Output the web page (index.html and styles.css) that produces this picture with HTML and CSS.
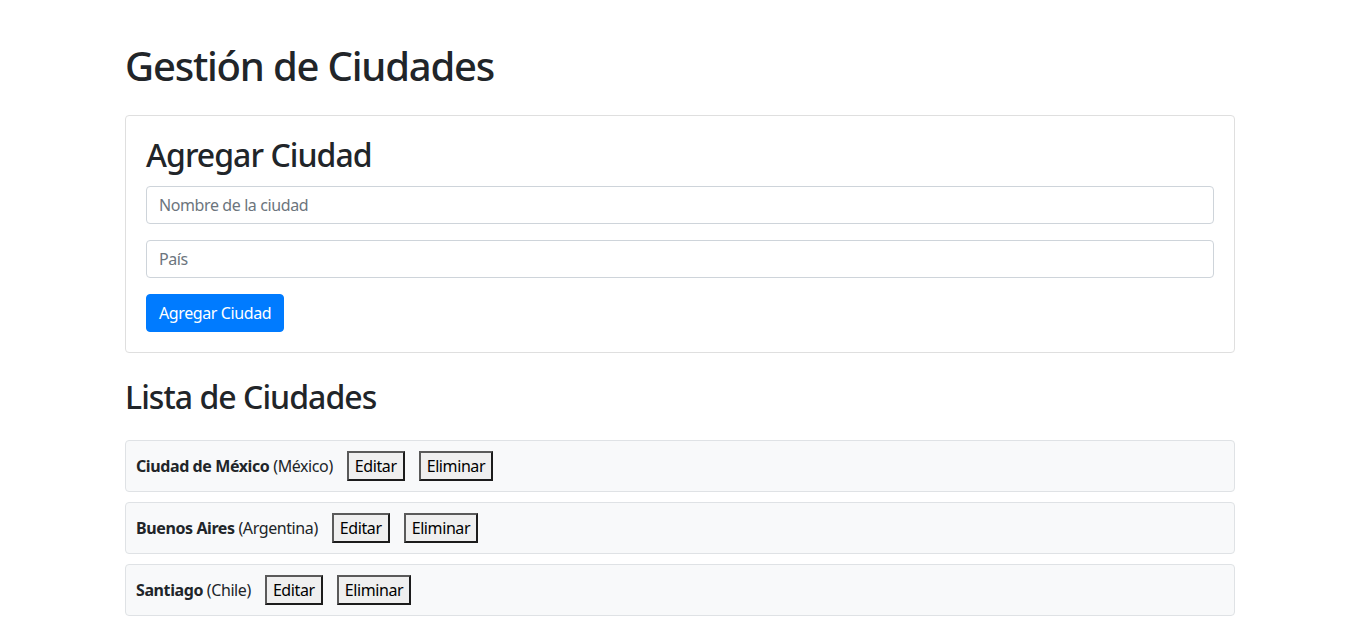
FILE: index.html
```html
<!DOCTYPE html>
<html lang="es">
<head>
<meta charset="utf-8">
<title>Gestión de Ciudades</title>
<link rel="stylesheet" href="styles.css">
</head>
<body>
<main class="container">
  <h1 class="page-title">Gestión de Ciudades</h1>

  <section class="card">
    <h2 class="card-title">Agregar Ciudad</h2>
    <form class="city-form">
      <input class="field" type="text" placeholder="Nombre de la ciudad">
      <input class="field" type="text" placeholder="País">
      <button class="btn-primary" type="button">Agregar Ciudad</button>
    </form>
  </section>

  <h2 class="list-title">Lista de Ciudades</h2>
  <ul class="city-list">
    <li class="city-item">
      <span class="city-label"><strong>Ciudad de México</strong> (México)</span>
      <button class="btn-plain" type="button">Editar</button>
      <button class="btn-plain" type="button">Eliminar</button>
    </li>
    <li class="city-item">
      <span class="city-label"><strong>Buenos Aires</strong> (Argentina)</span>
      <button class="btn-plain" type="button">Editar</button>
      <button class="btn-plain" type="button">Eliminar</button>
    </li>
    <li class="city-item">
      <span class="city-label"><strong>Santiago</strong> (Chile)</span>
      <button class="btn-plain" type="button">Editar</button>
      <button class="btn-plain" type="button">Eliminar</button>
    </li>
  </ul>
</main>
</body>
</html>
```
FILE: styles.css
```css
* { box-sizing: border-box; }

body {
  margin: 0;
  font-family: "Segoe UI", "Noto Sans", "Liberation Sans", sans-serif;
  font-size: 16px;
  line-height: 1.5;
  letter-spacing: -0.025em;
  color: #212529;
  background: #fff;
}

.container {
  width: 1110px;
  margin-left: calc(50% - 553px);
  padding-top: 42px;
}

.page-title {
  font-size: 40px;
  font-weight: 500;
  line-height: 48px;
  letter-spacing: -0.03em;
  margin: 0 0 25px;
}

.card {
  border: 1px solid #dfdfdf;
  border-radius: 4px;
  padding: 20px;
}

.card-title {
  font-size: 32px;
  font-weight: 500;
  line-height: 38px;
  letter-spacing: -0.03em;
  margin: 0 0 12px;
}

.city-form {
  display: flex;
  flex-direction: column;
  align-items: flex-start;
  gap: 16px;
}

.field {
  display: block;
  width: 100%;
  height: 38px;
  padding: 6px 12px;
  font: inherit;
  letter-spacing: inherit;
  color: #495057;
  border: 1px solid #ced4da;
  border-radius: 4px;
  background: #fff;
}

.field::placeholder { color: #6c757d; }

.btn-primary {
  height: 38px;
  padding: 6px 12px;
  font: inherit;
  letter-spacing: inherit;
  color: #fff;
  background: #007bff;
  border: 1px solid #007bff;
  border-radius: 4px;
}

.list-title {
  font-size: 32px;
  font-weight: 500;
  line-height: 38px;
  letter-spacing: -0.03em;
  margin: 25px 0 24px;
}

.city-list {
  list-style: none;
  margin: 0;
  padding: 0;
  display: flex;
  flex-direction: column;
  gap: 10px;
}

.city-item {
  display: flex;
  align-items: center;
  gap: 14px;
  padding: 10px;
  background: #f8f9fa;
  border: 1px solid #dfe2e5;
  border-radius: 4px;
}

.city-label strong { font-weight: 700; }

.btn-plain {
  height: 30px;
  padding: 1px 6px;
  font: inherit;
  letter-spacing: inherit;
  line-height: 24px;
  color: #000;
  background: #efefef;
  border: 2px solid;
  border-color: #5a5a5a #1c1c1c #1c1c1c #5a5a5a;
  border-radius: 0;
}
```
